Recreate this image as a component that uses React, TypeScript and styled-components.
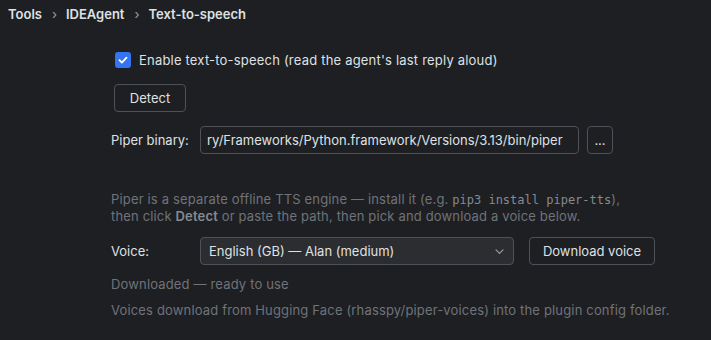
import React from "react";
import styled, { createGlobalStyle } from "styled-components";

const Global = createGlobalStyle`
  html, body {
    margin: 0;
    padding: 0;
    background: #1e1f22;
  }
  body {
    font-family: Inter, "Noto Sans", sans-serif;
    font-size: 13px;
    color: #dfe1e5;
    -webkit-font-smoothing: antialiased;
  }
`;

const Page = styled.div`
  width: 711px;
  height: 340px;
  overflow: hidden;
  background: #1e1f22;
`;

const Breadcrumbs = styled.nav`
  display: flex;
  align-items: center;
  height: 28px;
  padding-left: 8px;
  font-weight: 600;
  font-size: 13px;
  color: #dfe1e5;
`;

const Crumb = styled.span``;

const Sep = styled.span`
  color: #9da0a8;
  font-weight: 400;
  margin: 0 9px 0 10px;
  font-size: 13px;
`;

const Content = styled.div`
  display: flex;
  flex-direction: column;
  align-items: flex-start;
  padding-left: 111px;
`;

const Row = styled.div<{ $mt: number; $ml?: number }>`
  display: flex;
  align-items: center;
  margin-top: ${(p) => p.$mt}px;
  margin-left: ${(p) => p.$ml ?? 0}px;
`;

const CheckBox = styled.span`
  width: 16px;
  height: 16px;
  border-radius: 3px;
  background: #3574f0;
  display: inline-flex;
  align-items: center;
  justify-content: center;
  margin-right: 8px;
`;

const Label = styled.span<{ $w?: number; $ls?: number }>`
  color: #dfe1e5;
  letter-spacing: ${(p) => p.$ls ?? 0}px;
  ${(p) => (p.$w ? `width: ${p.$w}px;` : "")}
`;

const Button = styled.button<{ $w: number; $mt?: number; $ml?: number }>`
  box-sizing: border-box;
  width: ${(p) => p.$w}px;
  height: 28px;
  margin-top: ${(p) => p.$mt ?? 0}px;
  margin-left: ${(p) => p.$ml ?? 0}px;
  background: #1e1f22;
  border: 1px solid #4e5157;
  border-radius: 4px;
  color: #dfe1e5;
  font-family: Inter, "Noto Sans", sans-serif;
  font-size: 13px;
  padding: 0;
  display: inline-flex;
  align-items: center;
  justify-content: center;
`;

const TextField = styled.div`
  box-sizing: border-box;
  width: 379px;
  height: 28px;
  border: 1px solid #4e5157;
  border-radius: 4px;
  display: flex;
  align-items: center;
  padding: 0 6px;
  overflow: hidden;
  white-space: nowrap;
  color: #dfe1e5;
`;

const Help = styled.p<{ $mt: number }>`
  margin: ${(p) => p.$mt}px 0 0 0;
  color: #6f737a;
  line-height: 16px;
  font-size: 13px;
  letter-spacing: 0.16px;
`;

const Bold = styled.b`
  color: #868a91;
  font-weight: 600;
`;

const Code = styled.code`
  font-family: "DejaVu Sans Mono", "Liberation Mono", monospace;
  font-size: 12px;
  letter-spacing: 0;
  color: #868a91;
`;

const Combo = styled.div`
  box-sizing: border-box;
  width: 314px;
  height: 28px;
  border: 1px solid #4e5157;
  border-radius: 4px;
  background: #2b2d30;
  display: flex;
  align-items: center;
  justify-content: space-between;
  padding: 0 9px 0 8px;
  color: #dfe1e5;
`;

const Chevron = () => (
  <svg width="9" height="5" viewBox="0 0 9 5" fill="none">
    <path d="M1 0.8l3.5 3.5 3.5-3.5" stroke="#9da0a8" strokeWidth="1.1" strokeLinecap="round" strokeLinejoin="round" />
  </svg>
);

export default function App() {
  return (
    <Page>
      <Global />
      <Breadcrumbs>
        <Crumb>Tools</Crumb>
        <Sep>›</Sep>
        <Crumb>IDEAgent</Crumb>
        <Sep>›</Sep>
        <Crumb>Text-to-speech</Crumb>
      </Breadcrumbs>
      <Content>
        <Row $mt={24} $ml={4}>
          <CheckBox>
            <svg width="12" height="12" viewBox="0 0 12 12" fill="none">
              <path d="M2.5 6.2l2.4 2.4 4.6-5" stroke="#fff" strokeWidth="1.8" strokeLinecap="round" strokeLinejoin="round" />
            </svg>
          </CheckBox>
          <Label $ls={0.2}>Enable text-to-speech (read the agent's last reply aloud)</Label>
        </Row>
        <Button $w={72} $mt={16} $ml={3}>Detect</Button>
        <Row $mt={14}>
          <Label $w={89}>Piper binary:</Label>
          <TextField>ry/Frameworks/Python.framework/Versions/3.13/bin/piper</TextField>
          <Button $w={26} $ml={8}>...</Button>
        </Row>
        <Help $mt={37}>
          Piper is a separate offline TTS engine — install it (e.g. <Code>pip3 install piper-tts</Code>),
          <br />
          then click <Bold>Detect</Bold> or paste the path, then pick and download a voice below.
        </Help>
        <Row $mt={13}>
          <Label $w={89}>Voice:</Label>
          <Combo>
            <span>English (GB) — Alan (medium)</span>
            <Chevron />
          </Combo>
          <Button $w={126} $ml={15}>Download voice</Button>
        </Row>
        <Help $mt={11}>Downloaded — ready to use</Help>
        <Help $mt={10}>Voices download from Hugging Face (rhasspy/piper-voices) into the plugin config folder.</Help>
      </Content>
    </Page>
  );
}
